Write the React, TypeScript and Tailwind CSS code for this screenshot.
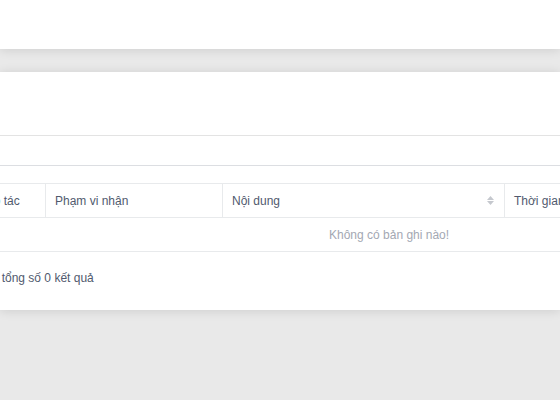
const font = { fontFamily: '"Liberation Sans", Arial, "Noto Sans", sans-serif' };

function SortIcon() {
  return (
    <span className="flex flex-col items-center gap-[1px]">
      <svg width="7" height="4" viewBox="0 0 7 4">
        <path d="M3.5 0 L7 4 L0 4 Z" fill="#c5c8ce" />
      </svg>
      <svg width="7" height="4" viewBox="0 0 7 4">
        <path d="M0 0 L7 0 L3.5 4 Z" fill="#c5c8ce" />
      </svg>
    </span>
  );
}

export default function App() {
  return (
    <div className="h-[400px] w-[560px] overflow-hidden bg-[#e9e9e9] text-[12px] text-[#515a6e]" style={font}>
      <div className="h-[49px] bg-white shadow-[0_1px_10px_rgba(0,0,0,0.12)]" />
      <div className="mt-[23px] h-[238px] bg-white shadow-[0_1px_10px_rgba(0,0,0,0.12)]">
        <div className="h-[64px] border-b border-[#e3e3e3]" />
        <div className="h-[30px] border-b border-[#dcdee2]" />
        <div className="mt-[17px] ml-[-36px] w-[700px]">
          <div className="flex h-[35px] border-y border-[#e8eaec]">
            <div className="flex w-[82px] items-center border-r border-[#e8eaec] pl-[9px]">Thao tác</div>
            <div className="flex w-[177px] items-center border-r border-[#e8eaec] pl-[9px]">Phạm vi nhận</div>
            <div className="flex w-[282px] items-center justify-between border-r border-[#e8eaec] pl-[9px] pr-[10px]">
              <span>Nội dung</span>
              <SortIcon />
            </div>
            <div className="flex flex-1 items-center pl-[9px]">Thời gian</div>
          </div>
          <div className="flex h-[34px] items-center border-b border-[#e8eaec] pl-[365px] text-[#a3a8b3]">
            Không có bản ghi nào!
          </div>
        </div>
        <div className="ml-[-17px] mt-[17px]">Có tổng số 0 kết quả</div>
      </div>
    </div>
  );
}
